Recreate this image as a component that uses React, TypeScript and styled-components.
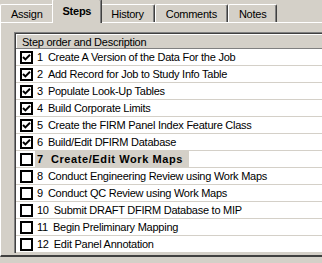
import React from 'react';
import styled, { createGlobalStyle } from 'styled-components';

const GlobalStyle = createGlobalStyle`
  html, body {
    margin: 0;
    padding: 0;
    background: #d4d0c8;
  }
  body {
    font-family: "Liberation Sans", Arial, sans-serif;
    font-size: 11px;
    color: #000;
  }
`;

const tabs = ['Assign', 'Steps', 'History', 'Comments', 'Notes'];

const steps = [
  { n: 1, text: 'Create A Version of the Data For the Job', done: true },
  { n: 2, text: 'Add Record for Job to Study Info Table', done: true },
  { n: 3, text: 'Populate Look-Up Tables', done: true },
  { n: 4, text: 'Build Corporate Limits', done: true },
  { n: 5, text: 'Create the FIRM Panel Index Feature Class', done: true },
  { n: 6, text: 'Build/Edit DFIRM Database', done: true },
  { n: 7, text: 'Create/Edit Work Maps', done: false, current: true },
  { n: 8, text: 'Conduct Engineering Review using Work Maps', done: false },
  { n: 9, text: 'Conduct QC Review using Work Maps', done: false },
  { n: 10, text: 'Submit DRAFT DFIRM Database to MIP', done: false },
  { n: 11, text: 'Begin Preliminary Mapping', done: false },
  { n: 12, text: 'Edit Panel Annotation', done: false },
];

const App = () => {
  return (
    <Window>
      <GlobalStyle />
      <TabStrip>
        {tabs.map(t => (
          <Tab key={t} $active={t === 'Steps'}>
            {t}
          </Tab>
        ))}
      </TabStrip>

      <Panel>
        <ListView>
          <Header>
            <HeaderCell>Step order and Description</HeaderCell>
          </Header>
          {steps.map(s => (
            <Row key={s.n}>
              <CheckBox>
                {s.done && (
                  <svg width="9" height="9" viewBox="0 0 9 9">
                    <path d="M1 4 L3.4 6.4 L8 1.8" stroke="#000" strokeWidth="2" fill="none" />
                  </svg>
                )}
              </CheckBox>
              <Label $current={s.current}>
                <Num>{s.n}</Num>
                <Desc $current={s.current}>{s.text}</Desc>
              </Label>
            </Row>
          ))}
        </ListView>
      </Panel>
    </Window>
  );
};

const Window = styled.div`
  width: 322px;
  height: 263px;
  overflow: hidden;
  background: #d4d0c8;
`;

const TabStrip = styled.div`
  display: flex;
  align-items: flex-end;
  height: 22px;
`;

const Tab = styled.div<{ $active?: boolean }>`
  position: relative;
  display: flex;
  align-items: center;
  height: ${p => (p.$active ? '21px' : '17px')};
  margin: ${p => (p.$active ? '0 -2px -1px' : '0')};
  padding: 0 10px ${p => (p.$active ? '2px' : '0')};
  border-top: 1px solid #fff;
  border-left: 1px solid #fff;
  border-right: 1px solid #404040;
  box-shadow: inset -1px 0 #808080;
  border-radius: 2px 2px 0 0;
  background: #d4d0c8;
  font-weight: ${p => (p.$active ? 'bold' : 'normal')};
  letter-spacing: -0.25px;
  z-index: ${p => (p.$active ? 1 : 0)};
  white-space: nowrap;
`;

const Panel = styled.div`
  border-top: 1px solid #fff;
  border-left: 1px solid #fff;
  border-bottom: 2px solid #404040;
  padding: 9px 0 2px 13px;
`;

const ListView = styled.div`
  width: 340px;
  background: #fff;
  border-top: 1px solid #808080;
  border-left: 1px solid #808080;
  box-shadow: inset 1px 1px #404040;
  padding: 1px 0 0 1px;
`;

const Header = styled.div`
  height: 14px;
  display: flex;
  border-bottom: 1px solid #808080;
  background: #d4d0c8;
`;

const HeaderCell = styled.div`
  flex: 1;
  display: flex;
  align-items: center;
  padding-left: 5px;
  border-top: 1px solid #fff;
  border-left: 1px solid #fff;
  letter-spacing: -0.25px;
  white-space: nowrap;
`;

const Row = styled.div`
  height: 16px;
  display: flex;
  align-items: center;
  padding-left: 4px;
  border-bottom: 1px solid #d4d0c8;
  white-space: nowrap;
`;

const CheckBox = styled.div`
  width: 13px;
  height: 13px;
  box-sizing: border-box;
  border: 2px solid #000;
  background: #fff;
  display: flex;
  align-items: center;
  justify-content: center;
  flex-shrink: 0;
`;

const Label = styled.div<{ $current?: boolean }>`
  height: 16px;
  display: flex;
  align-items: center;
  margin-left: 2px;
  padding: 0 ${p => (p.$current ? '6px' : '2px')} 0 2px;
  background: ${p => (p.$current ? '#d4d0c8' : 'transparent')};
  font-weight: ${p => (p.$current ? 'bold' : 'normal')};
`;

const Num = styled.span`
  letter-spacing: -0.25px;
`;

const Desc = styled.span<{ $current?: boolean }>`
  margin-left: ${p => (p.$current ? '8px' : '5px')};
  letter-spacing: ${p => (p.$current ? '0.6px' : '-0.25px')};
`;

export default App;
